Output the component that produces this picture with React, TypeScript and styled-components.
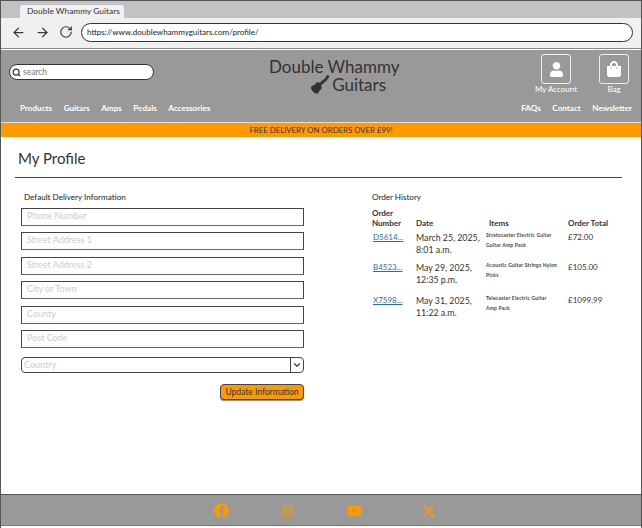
import React from "react";
import styled, { createGlobalStyle } from "styled-components";
import { FaFacebook, FaInstagram, FaYoutube, FaUser, FaShoppingBag } from "react-icons/fa";
import { FaXTwitter } from "react-icons/fa6";
import { ArrowLeft, ArrowRight, RotateCw, Search, ChevronDown } from "lucide-react";

const Global = createGlobalStyle`
  html, body { margin: 0; padding: 0; background: #fff; }
  body { font-family: "Lato", "Liberation Sans", sans-serif; color: #2b2b2b; }
  * { box-sizing: border-box; }
`;
const Frame = styled.div`
  width: 642px; height: 528px; display: flex; flex-direction: column;
  overflow: hidden; background: #fff; border: 1px solid #555; border-bottom: none;
`;
const TabStrip = styled.div`
  height: 17px; background: #c2c2c2; padding: 4px 0 0 19px; display: flex;
`;
const Tab = styled.div`
  width: 104px; height: 13px; background: #f0f0f0; border-radius: 3px 3px 0 0; white-space: nowrap;
  font-size: 8.4px; line-height: 13px; padding-left: 7px; color: #333;
`;
const AddressBar = styled.div`
  height: 31px; background: #f0f0f0; display: flex; align-items: center; padding: 0 8px 1px 10px;
  border-bottom: 1px solid #888;
`;
const NavIcons = styled.div`
  display: flex; gap: 9px; color: #3a3a3a; margin-right: 8px;
`;
const Url = styled.div`
  flex: 1; height: 19px; background: #fff; border: 1px solid #333; border-radius: 10px;
  font-size: 8px; line-height: 17px; padding-left: 5px; color: #222;
`;
const Header = styled.header`
  background: #999; height: 72px; margin-top: 1px; padding: 12px 8px 0 8px; display: flex; flex-direction: column;
`;
const TopRow = styled.div`
  display: grid; grid-template-columns: 260px 132px 1fr; align-items: start; height: 40px;
`;
const SearchBox = styled.div`
  width: 145px; height: 16px; margin-top: 2px; background: #fff; border: 1px solid #333; border-radius: 8px;
  display: flex; align-items: center; gap: 2px; padding-left: 2px; font-size: 8.5px; color: #777;
`;
const Logo = styled.div`
  margin-top: -4px; color: #333; font-size: 17px; line-height: 17px;
`;
const LogoTop = styled.div` white-space: nowrap; `;
const LogoBottom = styled.div`
  display: flex; align-items: center; justify-content: flex-end; gap: 2px; padding-right: 15px; white-space: nowrap;
`;
const Accounts = styled.div`
  display: flex; justify-self: end; gap: 14px; margin-top: -8px; margin-right: -3px;
`;
const Account = styled.div`
  width: 44px; display: flex; flex-direction: column; align-items: center; gap: 0;
  color: #fff; font-size: 8px; white-space: nowrap; line-height: 11px;
`;
const IconBox = styled.div`
  width: 30px; height: 30px; border: 1px solid #eee; border-radius: 3px; display: flex; align-items: center; justify-content: center;
`;
const NavRow = styled.nav`
  display: flex; justify-content: space-between; padding: 0 1px 0 11px;
  color: #fff; font-size: 8.1px; font-weight: 700; line-height: 12px;
`;
const NavGroup = styled.div` display: flex; gap: 11.5px; `;
const Promo = styled.div`
  height: 15px; background: #ff9900; border-top: 1px solid #ddd;
  text-align: center; font-size: 7.8px; line-height: 14px; color: #333;
`;
const Main = styled.main` flex: 1; padding: 11px 19px 0 14px; `;
const Title = styled.h1`
  margin: 0; padding: 0 0 9px 3px; font-size: 15px; line-height: 20px; font-weight: 400; color: #333;
  border-bottom: 1px solid #444;
`;
const Columns = styled.div` display: grid; grid-template-columns: 283px 1fr; gap: 68px; padding: 13px 0 0 6px; `;
const SectionLabel = styled.div<{ $inset?: boolean }>`
  font-size: 8.1px; line-height: 12px; color: #222; padding-left: ${p => (p.$inset ? 3 : 0)}px;
`;
const Form = styled.div` display: flex; flex-direction: column; gap: 6.4px; margin-top: 5px; `;
const Field = styled.div`
  height: 18px; border: 1px solid #444; border-bottom-color: #666; font-size: 9px; line-height: 14px; color: #ccc; padding-left: 5px;
`;
const SelectBox = styled.div`
  margin-top: 3px; height: 16px; border: 1px solid #444; border-radius: 4px; display: flex; justify-content: space-between;
  font-size: 9px; line-height: 14px; color: #ccc; padding-left: 2px;
`;
const Caret = styled.div`
  width: 13px; border-left: 1px solid #444; color: #444; display: flex; align-items: center; justify-content: center;
`;
const ButtonRow = styled.div` display: flex; justify-content: flex-end; margin-top: 11px; `;
const Button = styled.button`
  width: 84px; height: 16px; padding: 0; background: #ff9900; border: 1px solid #444; border-radius: 4px;
  box-shadow: 0 1px 1px #888; font-family: inherit; font-size: 8.5px; color: #333;
`;
const Table = styled.div`
  display: grid; grid-template-columns: 44px 73px 79px 1fr; margin-top: 5px; font-size: 8px; line-height: 11.5px; color: #333;
`;
const Th = styled.div` font-weight: 700; align-self: end; padding-bottom: 4px; line-height: 10px; `;
const Cell = styled.div<{ $tall?: boolean }>` height: ${p => (p.$tall ? 33 : 30)}px; `;
const DateCell = styled(Cell)` font-size: 8.8px; white-space: nowrap; `;
const OrderLink = styled.a` color: #1f6fb2; text-decoration: underline; padding-left: 1px; `;
const Tiny = styled.div`
  font-size: 5px; line-height: 10px; letter-spacing: 0.2px; color: #444; margin: -2px 0 0 -3px; padding-right: 10px; font-weight: 700;
`;
const Footer = styled.footer`
  height: 32px; background: #999; border-top: 1px solid #555; border-bottom: 1px solid #777; display: flex; align-items: center; justify-content: center; gap: 52px;
  color: #ff9900; margin-bottom: 2px; padding: 1px 0 0 7px;
`;
const XIcon = styled(FaXTwitter)` margin-left: 8px; `;

const orders = [
  { id: "D5614...", date: "March 25, 2025,", time: "8:01 a.m.", items: "Stratocaster Electric Guitar Guitar Amp Pack", total: "£72.00" },
  { id: "B4523...", date: "May 29, 2025,", time: "12:35 p.m.", items: "Acoustic Guitar Strings Nylon Picks", total: "£105.00" },
  { id: "X7598...", date: "May 31, 2025,", time: "11:22 a.m.", items: "Telecaster Electric Guitar Amp Pack", total: "£1099.99" },
];
const fields = ["Phone Number", "Street Address 1", "Street Address 2", "City or Town", "County", "Post Code"];

export default function App() {
  return (
    <Frame>
      <Global />
      <TabStrip><Tab>Double Whammy Guitars</Tab></TabStrip>
      <AddressBar>
        <NavIcons>
          <ArrowLeft size={15} />
          <ArrowRight size={15} />
          <RotateCw size={14} />
        </NavIcons>
        <Url>https://www.doublewhammyguitars.com/profile/</Url>
      </AddressBar>
      <Header>
        <TopRow>
          <SearchBox><Search size={9} color="#333" strokeWidth={3} />search</SearchBox>
          <Logo>
            <LogoTop>Double Whammy</LogoTop>
            <LogoBottom>
              <svg width="20" height="19" viewBox="0 0 20 19" fill="#333">
                <path d="M19.5 1.5 18 0l-2 1-.2 1.4-6 5.4c-1.6-.9-3.2-.8-4 .4-.5.8-.5 1.5-1.3 1.8-1.6.4-3.2.9-3.5 2.5-.3 2 2.6 5.4 5 6 1.7.4 2.8-.6 3.3-2.3.3-1 .9-1.3 1.6-1.8 1.1-.9 1-2.6.2-3.8l6-5.6z" />
              </svg>
              Guitars
            </LogoBottom>
          </Logo>
          <Accounts>
            <Account><IconBox><FaUser size={15} /></IconBox>My Account</Account>
            <Account><IconBox><FaShoppingBag size={16} /></IconBox>Bag</Account>
          </Accounts>
        </TopRow>
        <NavRow>
          <NavGroup><span>Products</span><span>Guitars</span><span>Amps</span><span>Pedals</span><span>Accessories</span></NavGroup>
          <NavGroup><span>FAQs</span><span>Contact</span><span>Newsletter</span></NavGroup>
        </NavRow>
      </Header>
      <Promo>FREE DELIVERY ON ORDERS OVER £99!</Promo>
      <Main>
        <Title>My Profile</Title>
        <Columns>
          <div>
            <SectionLabel $inset>Default Delivery Information</SectionLabel>
            <Form>
              {fields.map(f => <Field key={f}>{f}</Field>)}
              <SelectBox>Country<Caret><ChevronDown size={10} strokeWidth={3} /></Caret></SelectBox>
            </Form>
            <ButtonRow><Button>Update Information</Button></ButtonRow>
          </div>
          <div>
            <SectionLabel>Order History</SectionLabel>
            <Table>
              <Th>Order<br />Number</Th><Th>Date</Th><Th>Items</Th><Th>Order Total</Th>
              {orders.map((o, i) => (
                <React.Fragment key={o.id}>
                  <Cell $tall={i === 1}><OrderLink>{o.id}</OrderLink></Cell>
                  <DateCell $tall={i === 1}>{o.date}<br />{o.time}</DateCell>
                  <Cell $tall={i === 1}><Tiny>{o.items}</Tiny></Cell>
                  <Cell $tall={i === 1}>{o.total}</Cell>
                </React.Fragment>
              ))}
            </Table>
          </div>
        </Columns>
      </Main>
      <Footer>
        <FaFacebook size={15} />
        <FaInstagram size={14} />
        <FaYoutube size={15} />
        <XIcon size={14} />
      </Footer>
    </Frame>
  );
}
